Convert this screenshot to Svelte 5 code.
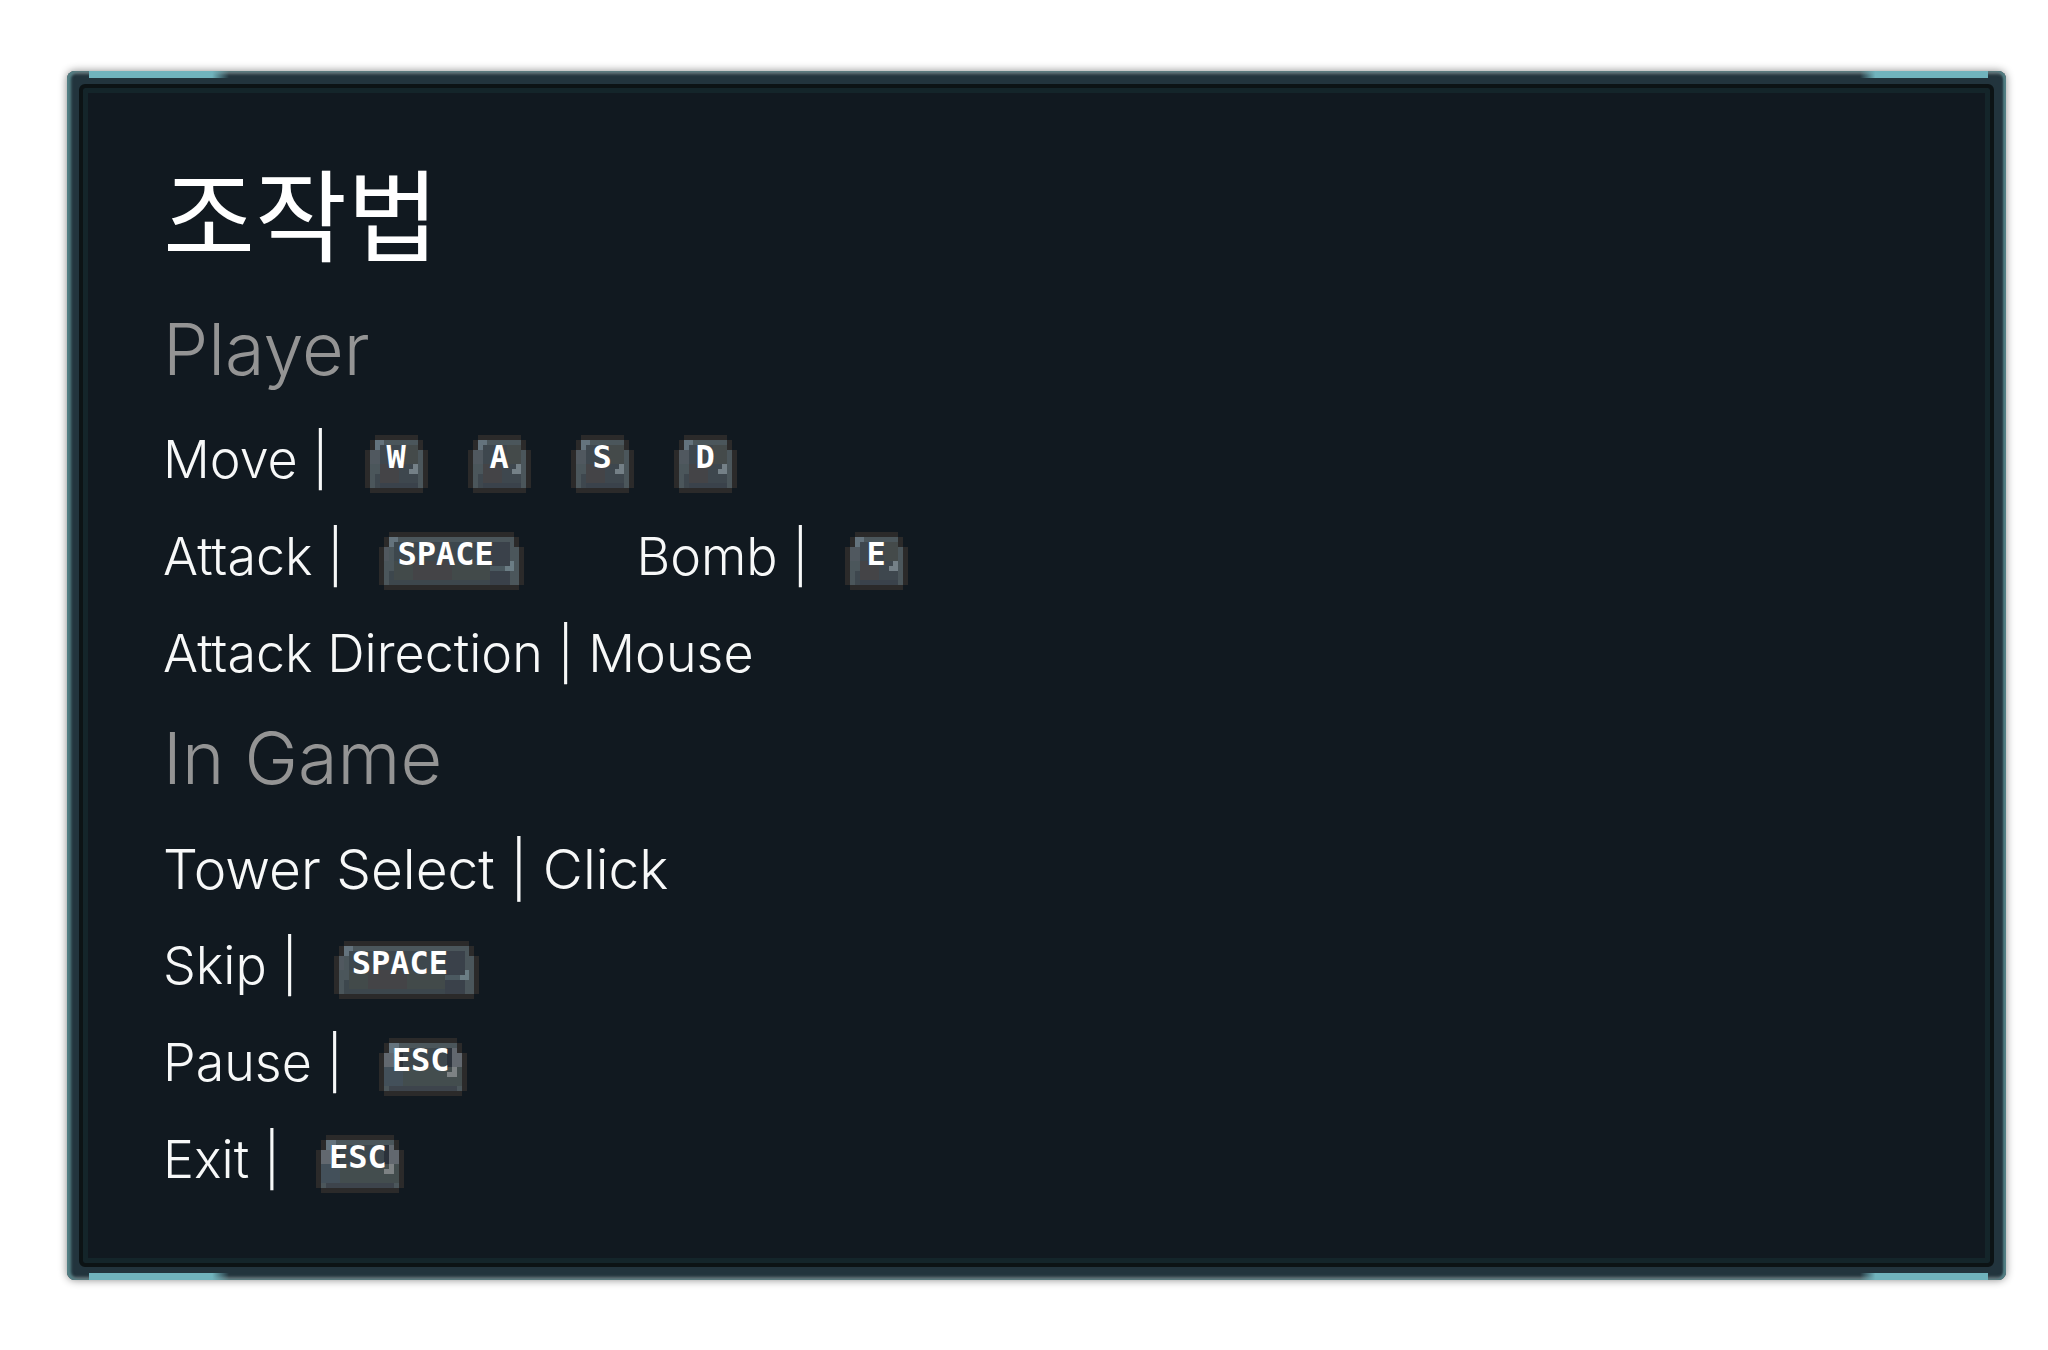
<script>
  const player = [
    [{ label: 'Move |', keys: ['W', 'A', 'S', 'D'] }],
    [{ label: 'Attack |', keys: ['SPACE'] }, { label: 'Bomb |', keys: ['E'] }],
    [{ label: 'Attack Direction | Mouse', keys: [] }]
  ];
  const game = [
    [{ label: 'Tower Select | Click', keys: [], large: true }],
    [{ label: 'Skip |', keys: ['SPACE'] }],
    [{ label: 'Pause |', keys: ['ESC'] }],
    [{ label: 'Exit |', keys: ['ESC'] }]
  ];
  const units = (key) => (key === 'SPACE' ? 30 : key === 'ESC' ? 18 : 13);
</script>

{#snippet keycap(key)}
  {@const w = units(key)}
  <kbd class="key" class:space={key === 'SPACE'} class:esc={key === 'ESC'}>
    <svg viewBox="0 0 {w} 12" preserveAspectRatio="none" shape-rendering="crispEdges" aria-hidden="true">
      <path fill="#2b2a2a" d="M2 0H{w - 2}V1H{w - 1}V3H{w}V11H{w - 1}V12H1V11H0V3H1V1H2Z" />
      <path fill="#4b565b" d="M2 1H{w - 2}V3H{w - 1}V11H1V3H2Z" />
      {#if key === 'SPACE'}
        <path fill="#3d474d" d="M3 2H27V11H2V8H3Z" />
        <path fill="#424a4a" d="M3 6H23V10H3Z" />
        <path fill="#444447" d="M7 6H15V10H7Z" />
        <path fill="#3a414a" d="M23 2H27V7H23ZM23 8H27V11H23Z" />
        <path fill="#4b5960" d="M23 7H26V8H23Z" />
        <path fill="#6b7d85" d="M27 6H28V8H26V7H27Z" />
        <path fill="#50585f" d="M1 3H2V6H1Z" />
      {:else if key === 'ESC'}
        <path fill="#3d474d" d="M3 2H15V6H3Z" />
        <path fill="#2b323b" d="M4 3H5V6H4ZM14 2H15V6H14Z" />
        <path fill="#434d4e" d="M1 6H17V10H1Z" />
        <path fill="#43505a" d="M1 6H5V10H1Z" />
        <path fill="#3d444c" d="M2 10H16V11H2Z" />
        <path fill="#62686f" d="M1 3H3V6H1ZM15 2H16V3H17V6H15Z" />
        <path fill="#7d8284" d="M15 6H16V8H14V7H15Z" />
      {:else}
        <path fill="#3e474e" d="M3 2H11V11H2V8H3Z" />
        <path fill="#444a4a" d="M8 2H11V6H8Z" />
        <path fill="#444447" d="M3 6H7V10H3Z" />
        <path fill="#3a424b" d="M3 10H11V11H3Z" />
        <path fill="#50585f" d="M1 3H3V6H1Z" />
        <path fill="#748087" d="M10 6H11V8H9V7H10Z" />
      {/if}
      <path fill="#64737d" d="M2 1H4V2H3V3H2Z" />
    </svg>
    <span>{key}</span>
  </kbd>
{/snippet}

{#snippet rows(list)}
  {#each list as row}
    <div class="row">
      {#each row as item}
        <div class="binding">
          <span class="label" class:large={item.large}>{item.label}</span>
          {#each item.keys as key}{@render keycap(key)}{/each}
        </div>
      {/each}
    </div>
  {/each}
{/snippet}

<main class="page">
  <article class="panel">
    <div class="lights top"><i></i><i></i></div>
    <div class="inner">
      <h1>조작법</h1>
      <section>
        <h2>Player</h2>
        {@render rows(player)}
      </section>
      <section>
        <h2>In Game</h2>
        {@render rows(game)}
      </section>
    </div>
    <div class="lights bottom"><i></i><i></i></div>
  </article>
</main>

<style>
  :global(body) { margin: 0; background: #fff; }
  .page {
    box-sizing: border-box;
    min-height: 100vh;
    padding: 71px 42px 70px 67px;
    display: flex;
    color: #f7f8f8;
    font-family: Inter, "Noto Sans CJK KR", sans-serif;
    font-weight: 300;
  }
  .panel {
    position: relative;
    flex: 1;
    display: flex;
    box-sizing: border-box;
    padding: 13px 12px;
    border-radius: 8px;
    background: #22343d;
    box-shadow: inset 4px 0 3px #527f84, inset -3px 0 2px #527f84, inset 0 3px 3px #66777b, inset 0 -3px 3px #66777b, 0 0 9px #00000077;
  }
  .inner {
    flex: 1;
    padding: 61px 80px 32px;
    border: 4px solid #0c1315;
    border-radius: 6px;
    background: #111920;
    box-shadow: inset 0 0 0 5px #14252a;
  }
  .lights {
    position: absolute;
    left: 22px;
    right: 18px;
    display: flex;
    justify-content: space-between;
  }
  .top { top: 0; }
  .bottom { bottom: 0; }
  i { width: 140px; height: 7px; background: linear-gradient(90deg, #70b3bd 88%, #70b3bd00); }
  i + i { width: 128px; background: linear-gradient(270deg, #70b3bd 88%, #70b3bd00); }
  h1, h2 { margin: 0; }
  h1 { margin-bottom: 24px; font-size: 100px; line-height: 124px; font-weight: 400; font-family: "Noto Sans CJK KR", sans-serif; color: #fff; }
  h2 { font-size: 72px; line-height: 104px; font-weight: 300; color: #949494; padding-bottom: 14px; }
  .row { display: flex; gap: 112px; height: 97px; align-items: center; }
  .binding { display: flex; align-items: center; gap: 36px; }
  .key + .key { margin-left: 4px; }
  .label { padding-bottom: 8px; font-size: 52px; line-height: 64px; white-space: pre; }
  .large { font-size: 55px; }
  .key { position: relative; display: flex; width: 63px; height: 58px; font-family: "DejaVu Sans Mono", monospace; font-weight: 700; }
  .key.space { width: 145px; }
  .key.esc { width: 88px; }
  .key svg { position: absolute; inset: 0; width: 100%; height: 100%; }
  .key span { position: relative; flex: 1; text-align: center; font-size: 32px; line-height: 44px; color: #fff; }
  .key.space span { text-align: left; padding-left: 18px; }
  .key.esc span { text-align: left; padding-left: 13px; }
</style>
